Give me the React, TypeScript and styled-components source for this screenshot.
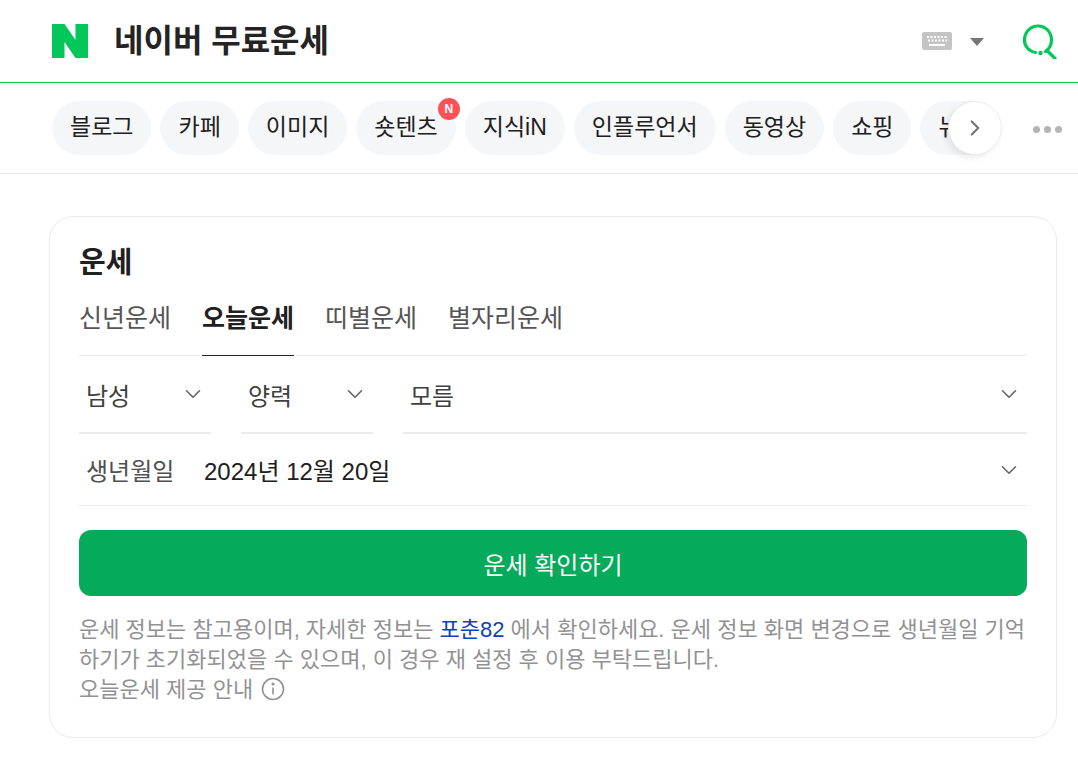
import styled, { createGlobalStyle } from 'styled-components'
import { ChevronDown, ChevronRight } from 'lucide-react'

const GlobalStyle = createGlobalStyle`
  html, body {
    margin: 0;
    padding: 0;
    background: #fff;
  }
  body {
    font-family: "Liberation Sans", "Noto Sans CJK KR", sans-serif;
    color: #202020;
  }
`

const Page = styled.div`
  width: 1078px;
  height: 763px;
  overflow: hidden;
`

const Header = styled.header`
  display: flex;
  align-items: center;
  height: 82px;
  padding: 0 20px 0 52px;
  border-bottom: 1px solid #03c75a;
`

const Title = styled.h1`
  margin: 0 0 0 26px;
  font-size: 32px;
  line-height: 40px;
  font-weight: 700;
  color: #242424;
  flex: 1;
`

const KeyboardButton = styled.div`
  display: flex;
  align-items: center;
  gap: 18px;
  margin-right: 38px;
`

const Caret = styled.span`
  width: 0;
  height: 0;
  border-left: 7px solid transparent;
  border-right: 7px solid transparent;
  border-top: 8px solid #767676;
  margin-top: 2px;
`

const NavBar = styled.nav`
  display: flex;
  align-items: center;
  height: 90px;
  border-bottom: 1px solid #ebebeb;
  padding-left: 52px;
`

const PillTrack = styled.div`
  position: relative;
  width: 950px;
  height: 90px;
  overflow: hidden;
  flex: none;
`

const PillRow = styled.ul`
  display: flex;
  gap: 9px;
  height: 100%;
  margin: 0;
  padding: 18px 0 0;
  list-style: none;
`

const Pill = styled.li`
  position: relative;
  flex: none;
  box-sizing: border-box;
  height: 54px;
  line-height: 52px;
  padding: 0 18px;
  border-radius: 27px;
  background: #f5f6f8;
  font-size: 23px;
  color: #202020;
  white-space: nowrap;
`

const NewBadge = styled.span`
  position: absolute;
  top: -3px;
  right: -4px;
  width: 22px;
  height: 22px;
  border-radius: 50%;
  background: #ff5258;
  color: #fff;
  font-size: 12px;
  font-weight: 700;
  line-height: 22px;
  text-align: center;
`

const ScrollButton = styled.button`
  position: absolute;
  top: 18px;
  left: 896px;
  display: flex;
  align-items: center;
  justify-content: center;
  width: 54px;
  height: 54px;
  padding: 0;
  border: 1px solid #ebebeb;
  border-radius: 50%;
  background: #fff;
  color: #767676;
  box-shadow: -3px 3px 6px rgba(0, 0, 0, 0.08);
`

const MoreDots = styled.div`
  display: flex;
  gap: 4px;
  margin-left: 31px;
  margin-top: 3px;
`

const Dot = styled.i`
  width: 7px;
  height: 7px;
  border-radius: 50%;
  background: #b4b4b4;
`

const Card = styled.section`
  box-sizing: border-box;
  width: 1008px;
  height: 522px;
  margin: 42px 0 0 49px;
  padding: 26px 29px 0;
  border: 1px solid #ebebeb;
  border-radius: 24px;
`

const CardTitle = styled.h2`
  margin: 0;
  font-size: 29px;
  line-height: 40px;
  font-weight: 700;
  color: #202020;
`

const Tabs = styled.div`
  display: flex;
  gap: 31px;
  height: 70px;
  margin-top: 2px;
  border-bottom: 1px solid #ebebeb;
`

const Tab = styled.div<{ $active?: boolean }>`
  height: 70px;
  line-height: 66px;
  font-size: 25px;
  font-weight: ${p => (p.$active ? 700 : 400)};
  color: ${p => (p.$active ? '#202020' : '#555')};
  border-bottom: 1px solid ${p => (p.$active ? '#202020' : 'transparent')};
  box-sizing: content-box;
`

const SelectRow = styled.div`
  display: flex;
  gap: 30px;
  height: 78px;
`

const Select = styled.div<{ $grow?: boolean }>`
  display: flex;
  align-items: center;
  justify-content: space-between;
  box-sizing: border-box;
  width: ${p => (p.$grow ? 'auto' : '132px')};
  flex: ${p => (p.$grow ? 1 : 'none')};
  padding: 0 5px 0 7px;
  border-bottom: 2px solid #ebebeb;
  font-size: 24px;
  color: #404040;
`

const DateRow = styled.div`
  display: flex;
  align-items: center;
  height: 71px;
  padding: 0 5px 0 7px;
  border-bottom: 1px solid #ebebeb;
`

const DateLabel = styled.span`
  width: 118px;
  font-size: 24px;
  color: #505050;
`

const DateValue = styled.span`
  flex: 1;
  font-size: 24px;
  color: #202020;
`

const SubmitButton = styled.button`
  display: block;
  width: 100%;
  height: 66px;
  margin-top: 24px;
  border: none;
  border-radius: 12px;
  background: #05ab5a;
  color: #fff;
  font-family: inherit;
  font-size: 24px;
`

const Notice = styled.p`
  margin: 19px 0 0;
  font-size: 22px;
  line-height: 30px;
  color: #929294;
`

const NoticeLink = styled.a`
  color: #0c43b7;
`

const InfoIcon = styled.svg`
  vertical-align: -4px;
  margin-left: 2px;
`

const pills = ['블로그', '카페', '이미지', '숏텐츠', '지식iN', '인플루언서', '동영상', '쇼핑', '뉴스']

const App = () => {
  return (
    <Page>
      <GlobalStyle />
      <Header>
        <svg width="36" height="34" viewBox="0 0 36 34">
          <path fill="#03c75a" d="M0 0h12.5l11 16V0H36v34H23.5l-11-16v16H0z" />
        </svg>
        <Title>네이버 무료운세</Title>
        <KeyboardButton>
          <svg width="30" height="18" viewBox="0 0 30 18">
            <rect width="30" height="18" rx="2" fill="#c4c4c4" />
            <path stroke="#fff" strokeWidth="2" strokeDasharray="2 1.5" d="M5 5h21M6 8.5h19" />
            <path stroke="#fff" strokeWidth="2" d="M7 13h16" />
          </svg>
          <Caret />
        </KeyboardButton>
        <svg width="36" height="36" viewBox="0 0 36 36" fill="none">
          <path
            stroke="#03c75a"
            strokeWidth="3.2"
            strokeLinecap="round"
            d="M13.5 29.5C7 28.5 2.5 23.500 2.500 17C2.500 9 8.500 3 16 3s13.500 6 13.500 14c0 5-2.500 9-6 11.500M25 27.500l8 8"
          />
          <circle cx="18.500" cy="30" r="2.200" fill="#03c75a" />
        </svg>
      </Header>
      <NavBar>
        <PillTrack>
          <PillRow>
            {pills.map(label => (
              <Pill key={label}>
                {label}
                {label === '숏텐츠' && <NewBadge>N</NewBadge>}
              </Pill>
            ))}
          </PillRow>
          <ScrollButton>
            <ChevronRight size={26} strokeWidth={2} />
          </ScrollButton>
        </PillTrack>
        <MoreDots>
          <Dot />
          <Dot />
          <Dot />
        </MoreDots>
      </NavBar>
      <Card>
        <CardTitle>운세</CardTitle>
        <Tabs>
          <Tab>신년운세</Tab>
          <Tab $active>오늘운세</Tab>
          <Tab>띠별운세</Tab>
          <Tab>별자리운세</Tab>
        </Tabs>
        <SelectRow>
          <Select>
            남성
            <ChevronDown size={26} strokeWidth={1.5} color="#666" />
          </Select>
          <Select>
            양력
            <ChevronDown size={26} strokeWidth={1.5} color="#666" />
          </Select>
          <Select $grow>
            모름
            <ChevronDown size={26} strokeWidth={1.5} color="#666" />
          </Select>
        </SelectRow>
        <DateRow>
          <DateLabel>생년월일</DateLabel>
          <DateValue>2024년 12월 20일</DateValue>
          <ChevronDown size={26} strokeWidth={1.5} color="#666" />
        </DateRow>
        <SubmitButton>운세 확인하기</SubmitButton>
        <Notice>
          운세 정보는 참고용이며, 자세한 정보는 <NoticeLink>포춘82</NoticeLink> 에서 확인하세요. 운세 정보 화면
          변경으로 생년월일 기억하기가 초기화되었을 수 있으며, 이 경우 재 설정 후 이용 부탁드립니다.
          <br />
          오늘운세 제공 안내{' '}
          <InfoIcon width="24" height="24" viewBox="0 0 24 24" fill="none" stroke="#929294" strokeWidth="1.6">
            <circle cx="12" cy="12" r="10.500" />
            <path d="M12 10.500v7" />
            <circle cx="12" cy="7" r="0.800" fill="#929294" />
          </InfoIcon>
        </Notice>
      </Card>
    </Page>
  )
}

export default App
